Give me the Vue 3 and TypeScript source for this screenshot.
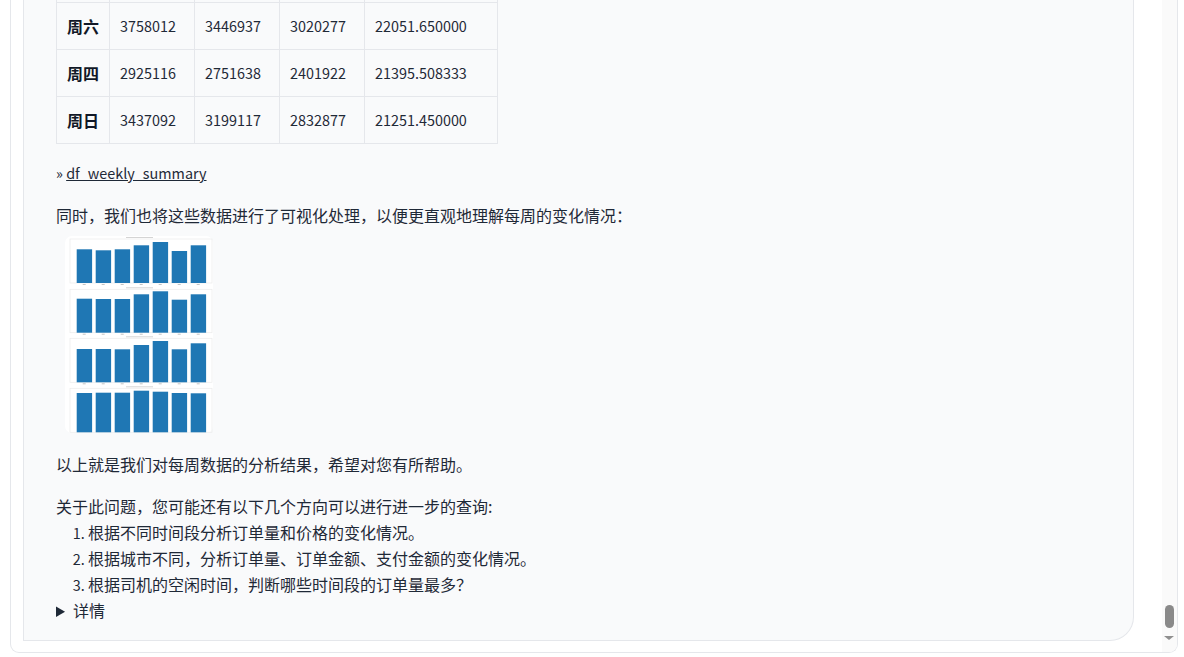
<script setup lang="ts">
const rows = [
  ['', '', '', '', ''],
  ['周六', '3758012', '3446937', '3020277', '22051.650000'],
  ['周四', '2925116', '2751638', '2401922', '21395.508333'],
  ['周日', '3437092', '3199117', '2832877', '21251.450000'],
]
const barX = [11.7, 30.7, 49.7, 68.7, 87.7, 106.7, 125.7]
const charts = [
  { top: 3, bottom: 47, bars: [13.3, 14.3, 13.3, 9.3, 6, 15, 9.3] },
  { top: 53.3, bottom: 96.7, bars: [62.7, 63, 63, 58.3, 55.3, 63.7, 58.3] },
  { top: 102.3, bottom: 146.3, bars: [113, 113, 113.3, 109, 105, 113.3, 107.3] },
  { top: 152.3, bottom: 196.3, bars: [157, 156.7, 156.7, 154.7, 155.7, 157, 157.3] },
]
const suggestions = [
  '根据不同时间段分析订单量和价格的变化情况。',
  '根据城市不同，分析订单量、订单金额、支付金额的变化情况。',
  '根据司机的空闲时间，判断哪些时间段的订单量最多？',
]
</script>

<template>
  <div class="page">
    <div class="card">
      <main class="panel">
        <table class="summary">
          <tbody>
            <tr v-for="(row, r) in rows" :key="r">
              <th>{{ row[0] }}</th>
              <td v-for="(cell, i) in row.slice(1)" :key="i">{{ cell }}</td>
            </tr>
          </tbody>
        </table>
        <p class="source"><span class="mark">»</span> <a class="link">df_weekly_summary</a></p>
        <p>同时，我们也将这些数据进行了可视化处理，以便更直观地理解每周的变化情况：</p>
        <svg class="chart" width="148" height="197" viewBox="0 0 148 197">
          <rect x="0" y="0" width="148" height="197" rx="7" fill="#fff" />
          <g v-for="(c, ci) in charts" :key="ci">
            <rect x="5" :y="c.top" width="142" :height="c.bottom - c.top" fill="none" stroke="#ebebeb" stroke-width="0.7" />
            <rect x="61" :y="c.top - 2" width="27" height="1" fill="#d4d4d4" />
            <rect v-for="(t, bi) in c.bars" :key="bi" :x="barX[bi]" :y="t" width="15.4" :height="c.bottom - t" fill="#1f77b4" />
            <rect v-for="(x, bi) in barX" :key="'t' + bi" :x="x + 6" :y="c.bottom + 1" width="3" height="1" fill="#c4c4c4" />
          </g>
        </svg>
        <p>以上就是我们对每周数据的分析结果，希望对您有所帮助。</p>
        <p class="lead">关于此问题，您可能还有以下几个方向可以进行进一步的查询:</p>
        <ol>
          <li v-for="s in suggestions" :key="s">{{ s }}</li>
        </ol>
        <details>
          <summary>详情</summary>
        </details>
      </main>
      <div class="gap"></div>
      <div class="scrollbar">
        <div class="thumb"></div>
        <div class="arrow"></div>
      </div>
    </div>
  </div>
</template>

<style scoped>
.page {
  height: 657px;
  box-sizing: border-box;
  padding: 0 6px 4px 10px;
  display: flex;
  flex-direction: column;
  overflow: hidden;
  background: #fff;
  font-family: "Noto Sans CJK SC", "Noto Sans", sans-serif;
  font-size: 16px;
  line-height: 26px;
  color: #1f2937;
}
.card {
  flex: 1;
  min-height: 0;
  display: flex;
  padding: 0 0 0 12px;
  overflow: hidden;
  border: 1px solid #e5e7eb;
  border-top: none;
  border-radius: 0 0 9px 9px;
}
.panel {
  width: 1111px;
  box-sizing: border-box;
  margin-bottom: 11px;
  padding: 0 32px 17px;
  display: flex;
  flex-direction: column;
  justify-content: flex-end;
  overflow: hidden;
  background: #f9fafb;
  border: 1px solid #e5e7eb;
  border-top: none;
  border-radius: 0 0 24px 0;
}
.gap {
  flex: 1;
}
.scrollbar {
  width: 15px;
  box-sizing: border-box;
  padding: 0 1px 12px 0;
  display: flex;
  flex-direction: column;
  justify-content: flex-end;
  align-items: center;
  background: #fafafa;
}
.thumb {
  width: 9px;
  height: 23px;
  border-radius: 5px;
  background: #8a8a8a;
}
.arrow {
  width: 0;
  height: 0;
  margin: 8px 0 0;
  border-left: 5px solid transparent;
  border-right: 5px solid transparent;
  border-top: 4px solid #8f8f8f;
}
.summary {
  flex: none;
  width: 442px;
  table-layout: fixed;
  border-collapse: collapse;
  font-size: 14.4px;
}
.summary th,
.summary td {
  height: 47px;
  box-sizing: border-box;
  padding: 0 10px;
  border: 1px solid #e5e7eb;
  text-align: left;
}
.summary th {
  width: 53px;
  font-size: 16px;
  font-weight: 700;
  color: #111827;
}
.summary td {
  width: 85px;
}
.summary td:last-child {
  width: 133px;
}
p {
  flex: none;
  margin: 16px 0 0;
}
.source {
  margin-top: 16px;
  font-size: 14.4px;
}
.link {
  text-decoration: underline;
}
.chart {
  flex: none;
  display: block;
  margin: 8px 0 2px 9px;
  filter: blur(0.45px);
}
ol {
  flex: none;
  margin: 0;
  padding-left: 32px;
}
li::marker {
  font-size: 14.4px;
}
details {
  flex: none;
}
summary {
  cursor: pointer;
}
</style>

<style>
html,
body {
  margin: 0;
  overflow: hidden;
}
</style>
